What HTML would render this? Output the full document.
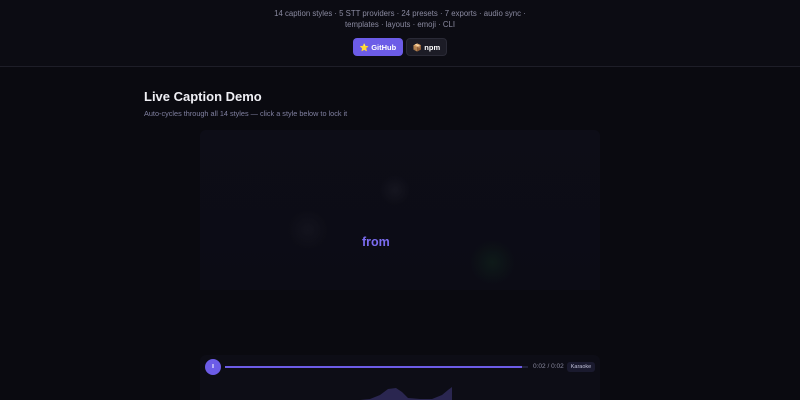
<!DOCTYPE html>
<html><head><style>
*{margin:0;padding:0;box-sizing:border-box}
body{width:800px;height:400px;overflow:hidden;background:#0a0a10;font-family:"Liberation Sans",sans-serif;position:relative}
.top{position:absolute;left:0;top:0;width:800px;height:67px;background:#0c0c13;border-bottom:1px solid #1e1e28}
.sub{position:absolute;left:0;width:800px;text-align:center;color:#8a8aa0;font-size:7.8px;line-height:11px}
.btn{position:absolute;top:38px;height:18px;border-radius:4px;font-size:7.5px;font-weight:bold;color:#fff;display:flex;align-items:center;justify-content:center}
h1{position:absolute;left:144px;top:89px;font-size:13px;color:#f0f0f5;font-weight:bold}
.desc{position:absolute;left:144px;top:109px;font-size:7.3px;color:#8080a0}
.stage{position:absolute;left:200px;top:130px;width:400px;height:160px;background:linear-gradient(#0d0d17,#0c0c15);border-radius:6px 6px 0 0}
.glow{position:absolute;border-radius:50%}
.player{position:absolute;left:200px;top:355px;width:400px;height:45px;background:#0d0d16;border-radius:6px 6px 0 0}
</style></head><body>
<div class="top"></div>
<div class="sub" style="top:8px">14 caption styles · 5 STT providers · 24 presets · 7 exports · audio sync ·</div>
<div class="sub" style="top:19px">templates · layouts · emoji · CLI</div>
<div class="btn" style="left:353px;width:50px;background:#6c5ce7">⭐ GitHub</div>
<div class="btn" style="left:406px;width:41px;background:#1c1c26;border:1px solid #2a2a36">📦 npm</div>
<h1>Live Caption Demo</h1>
<div class="desc">Auto-cycles through all 14 styles — click a style below to lock it</div>
<div class="stage">
<div class="glow" style="left:180px;top:45px;width:30px;height:30px;background:radial-gradient(#15151f,transparent 70%)"></div>
<div class="glow" style="left:88px;top:80px;width:40px;height:40px;background:radial-gradient(#13131d,transparent 70%)"></div>
<div class="glow" style="left:270px;top:110px;width:45px;height:45px;background:radial-gradient(#0e1a19,transparent 70%)"></div>
<div style="position:absolute;left:162px;top:105px;font-size:12.5px;font-weight:bold;color:#7b6cf0">from</div>
</div>
<div class="player">
<div style="position:absolute;left:5px;top:4px;width:16px;height:16px;border-radius:50%;background:#6c5ce7;color:#fff;font-size:5px;text-align:center;line-height:16px">II</div>
<div style="position:absolute;left:25px;top:11px;width:303px;height:2px;background:#22223a"></div>
<div style="position:absolute;left:25px;top:11px;width:297px;height:2px;background:#6c5ce7"></div>
<div style="position:absolute;left:333px;top:8px;font-size:6.5px;color:#8a8aa0">0:02 / 0:02</div>
<div style="position:absolute;left:367px;top:7px;width:28px;height:10px;border-radius:3px;background:#1a1a2e;color:#c0c0d8;font-size:5.5px;text-align:center;line-height:10px">Karaoke</div>
<svg style="position:absolute;left:160px;top:30px" width="95" height="15">
<path d="M0 15 L10 14 L20 10 L28 4 L36 3 L42 7 L48 13 L60 14 L72 14 L82 10 L88 5 L92 2 L92 15 Z" fill="#2a2650"/>
</svg>
</div>
</body></html>
